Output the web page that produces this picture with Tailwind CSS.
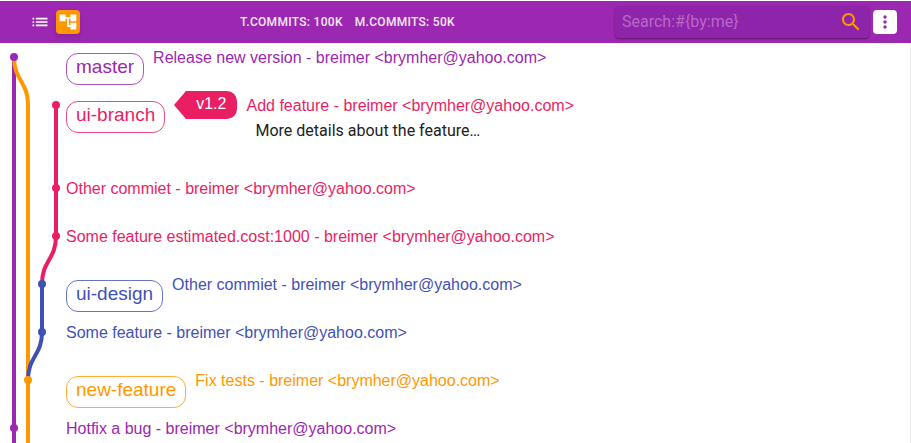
<!DOCTYPE html>
<html lang="en">
<head>
<meta charset="utf-8">
<meta name="viewport" content="width=device-width, initial-scale=1">
<title>Commits</title>
<script src="https://cdn.jsdelivr.net/npm/@tailwindcss/browser@4"></script>
</head>
<body class="flex h-screen flex-col overflow-hidden bg-white pt-px font-['Liberation_Sans',Arial,sans-serif] text-base leading-6">
<header class="flex h-[42px] shrink-0 items-center bg-[#9c27b0] pr-3.5 pl-7 font-[Roboto,sans-serif] text-white">
  <div class="flex items-center gap-1">
    <button type="button" aria-label="List view" class="flex size-6 items-center justify-center rounded">
      <svg class="size-5" viewBox="0 0 24 24" fill="currentColor"><path d="M3 13h2v-2H3v2zm0 4h2v-2H3v2zm0-8h2V7H3v2zm4 4h14v-2H7v2zm0 4h14v-2H7v2zM7 7v2h14V7H7z"/></svg>
    </button>
    <button type="button" aria-label="Tree view" class="flex size-6 items-center justify-center rounded bg-[#ff9800] shadow-md">
      <svg class="size-5" viewBox="0 0 24 24" fill="currentColor"><path d="M22 11V3h-7v3H9V3H2v8h7V8h2v10h4v3h7v-8h-7v3h-2V8h2v3z"/></svg>
    </button>
  </div>
  <div class="flex flex-1 justify-center gap-3 text-xs font-medium tracking-wide text-white/90">
    <span>T.COMMITS: 100K</span>
    <span>M.COMMITS: 50K</span>
  </div>
  <form class="flex h-8 w-[254px] items-center rounded bg-[#8e24aa] pr-1.5 pl-[7px] shadow-[0_1px_2px_rgba(0,0,0,0.4)]">
    <input type="text" aria-label="Search" placeholder="Search:#{by:me}" class="min-w-0 flex-1 bg-transparent text-base text-white outline-none placeholder:text-[#ba68c8]">
    <button type="button" aria-label="Search" class="text-[#ff9800]">
      <svg class="size-6" viewBox="0 0 24 24" fill="currentColor"><path d="M15.5 14h-.79l-.28-.27C15.41 12.59 16 11.11 16 9.5 16 5.91 13.09 3 9.5 3S3 5.91 3 9.5 5.91 16 9.5 16c1.61 0 3.09-.59 4.23-1.57l.27.28v.79l5 4.99L20.49 19l-4.99-5zm-6 0C7.01 14 5 11.99 5 9.5S7.01 5 9.5 5 14 7.01 14 9.5 11.99 14 9.5 14z"/></svg>
    </button>
  </form>
  <button type="button" aria-label="More options" class="ml-1 flex size-6 items-center justify-center rounded bg-white text-[#9c27b0]">
    <svg class="size-5" viewBox="0 0 24 24" fill="currentColor"><path d="M12 8c1.1 0 2-.9 2-2s-.9-2-2-2-2 .9-2 2 .9 2 2 2zm0 2c-1.1 0-2 .9-2 2s.9 2 2 2 2-.9 2-2-.9-2-2-2zm0 6c-1.1 0-2 .9-2 2s.9 2 2 2 2-.9 2-2-.9-2-2-2z"/></svg>
  </button>
</header>
<main class="flex min-h-0 flex-1 overflow-hidden border-r border-[#eeeeee]">
  <!-- Branch graph: one lane every 14px, one commit every 48px -->
  <svg class="h-[400px] w-[66px] shrink-0" viewBox="0 0 66 400" fill="none" stroke-width="4">
    <path stroke="#9c27b0" d="M14 14V400"/>
    <path stroke="#ff9800" d="M14 14C14 38 28 38 28 62V400"/>
    <path stroke="#e91e63" d="M56 62V193C56 217 42 217 42 241"/>
    <path stroke="#3f51b5" d="M42 241V289C42 313 28 313 28 337"/>
    <g stroke="none">
      <g fill="#9c27b0"><circle cx="14" cy="14" r="4"/><circle cx="14" cy="385" r="4"/></g>
      <g fill="#e91e63"><circle cx="56" cy="62" r="4"/><circle cx="56" cy="145" r="4"/><circle cx="56" cy="193" r="4"/></g>
      <g fill="#3f51b5"><circle cx="42" cy="241" r="4"/><circle cx="42" cy="289" r="4"/></g>
      <circle fill="#ff9800" cx="28" cy="337" r="4"/>
    </g>
  </svg>
  <ol class="min-w-0 flex-1 pt-[3px] whitespace-nowrap">
    <li class="flex h-12 items-start gap-[9px] text-[#9c27b0]">
      <span class="mt-[7px] flex h-8 items-center rounded-xl border border-current/80 px-[9px] pb-1 text-[19px]">master</span>
      <p>Release new version - breimer &lt;brymher@yahoo.com&gt;</p>
    </li>
    <li class="flex h-[83px] items-start gap-[9px] text-[#e91e63]">
      <span class="mt-[7px] flex h-8 items-center rounded-xl border border-current/80 px-[9px] pb-1 text-[19px]">ui-branch</span>
      <span class="-mt-[3px] flex h-7 items-center">
        <svg class="h-7 w-3" viewBox="0 0 12 28" fill="currentColor"><path d="M12 0L0 14L12 28Z"/></svg>
        <span class="flex h-7 items-center rounded-r-[10px] bg-[#e91e63] pr-[11px] pb-0.5 pl-2.5 text-white">v1.2</span>
      </span>
      <div>
        <p>Add feature - breimer &lt;brymher@yahoo.com&gt;</p>
        <p class="pt-px pl-[9px] font-[Roboto,sans-serif] text-[#212121]">More details about the feature…</p>
      </div>
    </li>
    <li class="h-12 text-[#e91e63]"><p>Other commiet - breimer &lt;brymher@yahoo.com&gt;</p></li>
    <li class="h-12 text-[#e91e63]"><p>Some feature estimated.cost:1000 - breimer &lt;brymher@yahoo.com&gt;</p></li>
    <li class="flex h-12 items-start gap-[9px] text-[#3f51b5]">
      <span class="mt-[7px] flex h-8 items-center rounded-xl border border-current/80 px-[9px] pb-1 text-[19px]">ui-design</span>
      <p>Other commiet - breimer &lt;brymher@yahoo.com&gt;</p>
    </li>
    <li class="h-12 text-[#3f51b5]"><p>Some feature - breimer &lt;brymher@yahoo.com&gt;</p></li>
    <li class="flex h-12 items-start gap-[9px] text-[#ff9800]">
      <span class="mt-[7px] flex h-8 items-center rounded-xl border border-current/80 px-[9px] pb-1 text-[19px]">new-feature</span>
      <p>Fix tests - breimer &lt;brymher@yahoo.com&gt;</p>
    </li>
    <li class="h-12 text-[#9c27b0]"><p>Hotfix a bug - breimer &lt;brymher@yahoo.com&gt;</p></li>
  </ol>
</main>
</body>
</html>
